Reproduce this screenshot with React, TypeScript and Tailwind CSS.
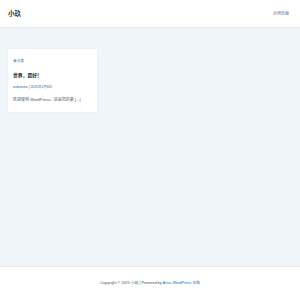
export default function App() {
  return (
    <div className="flex flex-col w-[300px] h-[300px] bg-[#f0f5fa] font-['Liberation_Sans','Noto_Sans_CJK_SC',sans-serif]">
      <header className="flex justify-between items-center h-[28px] bg-white border-b border-[#e5eaf0] pl-[8px] pr-[11px]">
        <span className="text-[6.5px] font-bold text-[#1e293b]">小玖</span>
        <span className="text-[4px] text-[#6b7280]">示例页面</span>
      </header>
      <main className="flex-1 pt-[21px] px-[8px]">
        <article className="w-[89px] h-[63px] bg-white rounded-[2px] shadow-[0_0_3px_rgba(0,0,0,0.05)] px-[5px] pt-[10px]">
          <div className="text-[3.7px] leading-[5px] text-[#0274be]">未分类</div>
          <h2 className="text-[4.8px] leading-[7px] mt-[8px] font-semibold text-[#111827]">世界，您好！</h2>
          <div className="text-[3.4px] leading-[5px] mt-[6px] text-[#0274be]">wobanme | 2025年1月6日</div>
          <p className="text-[4px] leading-[5px] mt-[7px] text-[#4b5563] whitespace-nowrap">欢迎使用 WordPress。这是您的第 [...]</p>
        </article>
      </main>
      <footer className="h-[34px] bg-white border-t border-[#e5eaf0] flex items-center justify-center">
        <span className="text-[3.8px] text-[#4b5563]">
          Copyright © 2025 小玖 | Powered by <span className="text-[#0274be]">Astra WordPress 主题</span>
        </span>
      </footer>
    </div>
  )
}
